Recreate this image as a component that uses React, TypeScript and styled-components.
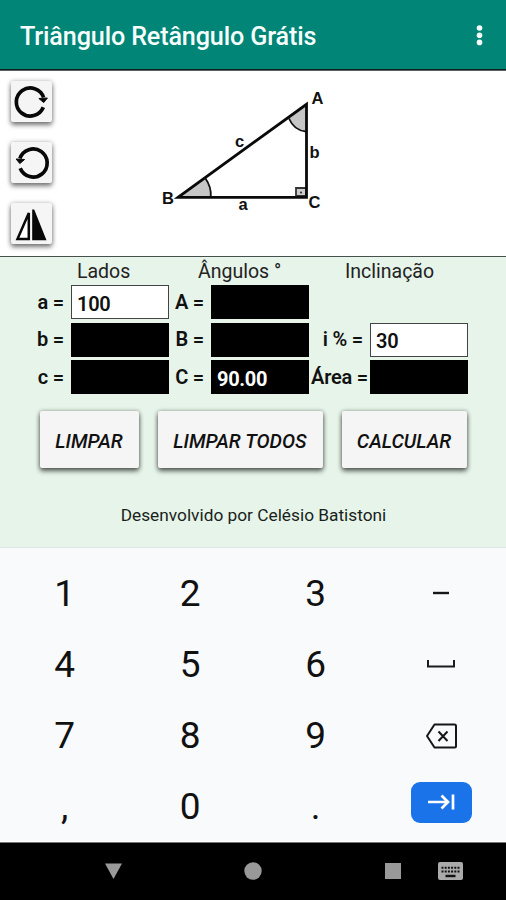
import React from "react";
import styled, { createGlobalStyle } from "styled-components";

const Global = createGlobalStyle`
  * { box-sizing: border-box; }
  html, body { margin: 0; padding: 0; background: #000; }
  body { font-family: Roboto, "Liberation Sans", sans-serif; color: #111; }
  button, input { font: inherit; color: inherit; margin: 0; }
  svg { display: block; }
`;

const Screen = styled.main`
  width: 506px;
  height: 900px;
  display: flex;
  flex-direction: column;
  overflow: hidden;
`;

const AppBar = styled.header`
  height: 70px;
  flex: none;
  display: flex;
  align-items: center;
  justify-content: space-between;
  padding: 4px 23px 0 20px;
  background: #018577;
  border-bottom: 1px solid #0b1f1c;
  color: #f6fffd;
`;

const Title = styled.h1`
  margin: 0;
  font-size: 25.2px;
  letter-spacing: -0.15px;
  line-height: 30px;
  font-weight: 500;
  white-space: nowrap;
`;

const Overflow = styled.button`
  border: 0;
  padding: 0 0 3px;
  background: none;
`;

const Figure = styled.section`
  height: 187px;
  flex: none;
  display: flex;
  background: #fff;
  border-top: 1px solid #5b6462;
  border-bottom: 1.5px solid #47504c;
`;

const Tools = styled.div`
  width: 150px;
  padding: 10px 0 0 11px;
  display: flex;
  flex-direction: column;
  gap: 20px;
`;

const ToolButton = styled.button`
  width: 41px;
  height: 41px;
  border: 0;
  border-radius: 2px;
  padding: 0;
  background: #f5f5f5;
  box-shadow: 0 3px 5px rgba(0, 0, 0, 0.5), 0 0 5px rgba(0, 0, 0, 0.22);
`;

const Drawing = styled.svg`
  margin-top: 9px;
  text {
    font: 700 16.5px "Liberation Sans", Arial, sans-serif;
    fill: #111;
  }
`;

const Form = styled.section`
  height: 291px;
  flex: none;
  background: #e6f4e9;
  border-bottom: 1px solid #dde6e2;
`;

const Headings = styled.div`
  display: grid;
  grid-template-columns: 121px 147px 137px;
  padding: 3px 0 0 77px;
  height: 28px;
  font-size: 19.5px;
  line-height: 23px;
  color: #222;
  white-space: nowrap;
`;

const Fields = styled.div`
  display: grid;
  grid-template-columns: 71px 98px 42px 98px 61px 98px;
  grid-auto-rows: 34px;
  row-gap: 3.5px;
`;

const Label = styled.label<{ $end: number }>`
  padding-right: ${(p) => p.$end}px;
  padding-top: 4.5px;
  text-align: right;
  font-size: 20px;
  letter-spacing: -0.2px;
  line-height: 24px;
  font-weight: 600;
  white-space: nowrap;
`;

const Field = styled.input<{ $dark?: boolean }>`
  width: 98px;
  height: 34px;
  padding: 3px 5px 0;
  border: 1px solid ${(p) => (p.$dark ? "#000" : "#444")};
  border-radius: 0;
  outline: 0;
  background: ${(p) => (p.$dark ? "#000" : "#fff")};
  color: ${(p) => (p.$dark ? "#fff" : "#111")};
  font-size: 20px;
  letter-spacing: -0.3px;
  font-weight: ${(p) => (p.$dark ? 700 : 600)};
`;

const Actions = styled.div`
  display: flex;
  gap: 19px;
  padding: 17px 0 0 40px;
`;

const Action = styled.button<{ $width: number }>`
  width: ${(p) => p.$width}px;
  height: 57px;
  padding: 3px 1px 0 0;
  border: 0;
  border-radius: 2px;
  background: #f5f5f5;
  font-size: 19.6px;
  font-style: italic;
  font-weight: 500;
  white-space: nowrap;
  box-shadow: 0 3px 5px rgba(0, 0, 0, 0.6), 0 0 4px rgba(0, 0, 0, 0.3);
`;

const Credit = styled.p`
  margin: 36px 0 0;
  padding-left: 1px;
  text-align: center;
  font-size: 17.3px;
  line-height: 22px;
  color: #1a1f1c;
`;

const Keypad = styled.section`
  height: 294px;
  flex: none;
  display: grid;
  grid-template-columns: repeat(4, 125.5px);
  grid-auto-rows: 71px;
  padding: 10px 0 0 2px;
  background: #f9fafc;
  border-bottom: 1px solid #fff;
`;

const Key = styled.button`
  border: 0;
  padding: 0;
  background: none;
  display: flex;
  align-items: center;
  justify-content: center;
  font-size: 37px;
  line-height: 44px;
`;

const NextKey = styled.span`
  width: 61px;
  height: 41px;
  margin-top: -9px;
  border-radius: 9px;
  background: #1a73e8;
  display: flex;
  align-items: center;
  justify-content: center;
`;

const NavBar = styled.nav`
  flex: 1;
  display: grid;
  grid-template-columns: 140px 140px 57px 26px;
  padding: 16px 0 0 101px;
  border-top: 1px solid #777;
  background: #000;
`;

function RotateIcon({ counter = false }: { counter?: boolean }) {
  return (
    <svg width="41" height="41" viewBox="0 0 41 41">
      <g transform={counter ? "translate(41.5 0) scale(-1 1)" : undefined}>
        <path d="M32.3 26.3A14 14 0 1 1 32.6 16.5" fill="none" stroke="#080808" strokeWidth="3.7" />
        <path d="M27.9 17.5 36.4 17 32.7 21.6Z" fill="#080808" stroke="#080808" strokeWidth="1" />
      </g>
    </svg>
  );
}

function MirrorIcon() {
  return (
    <svg width="41" height="41" viewBox="0 0 41 41">
      <path d="M17.8 10V36H6.5Z" fill="#fff" stroke="#080808" strokeWidth="2.5" />
      <path d="M21.2 6.5H23.2L35.5 37.3H21.2Z" fill="#080808" />
    </svg>
  );
}

function Triangle() {
  return (
    <Drawing width="190" height="140" viewBox="150 80 190 140">
      <path d="M178.5 197 205.5 178.5A33 33 0 0 1 210.8 197Z" fill="#c6c6c6" />
      <path d="M205.5 178.5Q211.5 187 210.8 197" fill="none" stroke="#111" strokeWidth="1.8" />
      <path d="M306 104V131.5Q294 130.5 289 118.5Z" fill="#c6c6c6" />
      <path d="M289 118.5Q294 130.5 306 131.5" fill="none" stroke="#111" strokeWidth="1.8" />
      <path d="M296 196V188H306V196Z" fill="#ccc" stroke="#333" strokeWidth="1.8" />
      <circle cx="301" cy="192.5" r="1.1" fill="#333" />
      <path d="M178 197.3H306.5V104.3Z" fill="none" stroke="#0a0a0a" strokeWidth="2.8" />
      <text x="311.5" y="104">A</text>
      <text x="162" y="204">B</text>
      <text x="308.5" y="208">C</text>
      <text x="238.5" y="210">a</text>
      <text x="309.5" y="158">b</text>
      <text x="235" y="147">c</text>
    </Drawing>
  );
}

function BackspaceIcon() {
  return (
    <svg width="33" height="28" viewBox="0 0 33 28" fill="none" stroke="#161616" strokeWidth="2">
      <path d="M9.5 2.5H29.5Q31 2.5 31 4V24Q31 25.5 29.5 25.5H9.5L2 14Z" strokeLinejoin="round" />
      <path d="M13.5 9.5 22.5 19M22.5 9.5 13.5 19" />
    </svg>
  );
}

function SpaceIcon() {
  return (
    <svg width="28" height="10" viewBox="0 0 28 10">
      <path d="M1 0V6.5H27V0" fill="none" stroke="#1c1c1c" strokeWidth="2" />
    </svg>
  );
}

function TabIcon() {
  return (
    <svg width="28" height="18" viewBox="0 0 28 18" fill="none" stroke="#fff" strokeWidth="2.7">
      <path d="M1 9H21M14.5 2.5 21 9 14.5 15.5M26 1.5V16.5" />
    </svg>
  );
}

function MinusIcon() {
  return (
    <svg width="16" height="6">
      <path d="M0 2H16" stroke="#161616" strokeWidth="2.4" />
    </svg>
  );
}

const keys: { id: string; face: React.ReactNode }[] = [
  { id: "1", face: "1" },
  { id: "2", face: "2" },
  { id: "3", face: "3" },
  { id: "minus", face: <MinusIcon /> },
  { id: "4", face: "4" },
  { id: "5", face: "5" },
  { id: "6", face: "6" },
  { id: "space", face: <SpaceIcon /> },
  { id: "7", face: "7" },
  { id: "8", face: "8" },
  { id: "9", face: "9" },
  { id: "backspace", face: <BackspaceIcon /> },
  { id: "comma", face: "," },
  { id: "0", face: "0" },
  { id: "dot", face: "." },
  { id: "next", face: <NextKey><TabIcon /></NextKey> },
];

export default function App() {
  return (
    <Screen>
      <Global />
      <AppBar>
        <Title>Triângulo Retângulo Grátis</Title>
        <Overflow>
          <svg width="7" height="22" fill="#f6fffd">
            <circle cx="3.5" cy="4" r="2.8" />
            <circle cx="3.5" cy="11.2" r="2.8" />
            <circle cx="3.5" cy="18.4" r="2.8" />
          </svg>
        </Overflow>
      </AppBar>
      <Figure>
        <Tools>
          <ToolButton><RotateIcon /></ToolButton>
          <ToolButton><RotateIcon counter /></ToolButton>
          <ToolButton><MirrorIcon /></ToolButton>
        </Tools>
        <Triangle />
      </Figure>
      <Form>
        <Headings>
          <span>Lados</span>
          <span>Ângulos °</span>
          <span>Inclinação</span>
        </Headings>
        <Fields>
          <Label $end={7}>a =</Label>
          <Field defaultValue="100" />
          <Label $end={7}>A =</Label>
          <Field $dark />
          <span />
          <span />
          <Label $end={7}>b =</Label>
          <Field $dark />
          <Label $end={7}>B =</Label>
          <Field $dark />
          <Label $end={7}>i % =</Label>
          <Field defaultValue="30" />
          <Label $end={7}>c =</Label>
          <Field $dark />
          <Label $end={7}>C =</Label>
          <Field $dark defaultValue="90.00" />
          <Label $end={2}>Área =</Label>
          <Field $dark />
        </Fields>
        <Actions>
          <Action $width={99}>LIMPAR</Action>
          <Action $width={165}>LIMPAR TODOS</Action>
          <Action $width={125}>CALCULAR</Action>
        </Actions>
        <Credit>Desenvolvido por Celésio Batistoni</Credit>
      </Form>
      <Keypad>
        {keys.map((key) => (
          <Key key={key.id}>{key.face}</Key>
        ))}
      </Keypad>
      <NavBar>
        <svg width="24" height="24" fill="#999"><path d="M4 4.5H21L12.5 20Z" /></svg>
        <svg width="24" height="24" fill="#999"><circle cx="12" cy="12" r="8.7" /></svg>
        <svg width="24" height="24" fill="#999"><path d="M4 4H20V20H4Z" /></svg>
        <svg width="26" height="24">
          <rect x="0" y="3" width="25" height="18" rx="2" fill="#aaa" />
          <path d="M3.5 8.8H22M3.5 12.5H22" stroke="#111" strokeWidth="2" strokeDasharray="2 1.2" />
          <path d="M7.5 17H17.5" stroke="#111" strokeWidth="2.4" />
        </svg>
      </NavBar>
    </Screen>
  );
}
